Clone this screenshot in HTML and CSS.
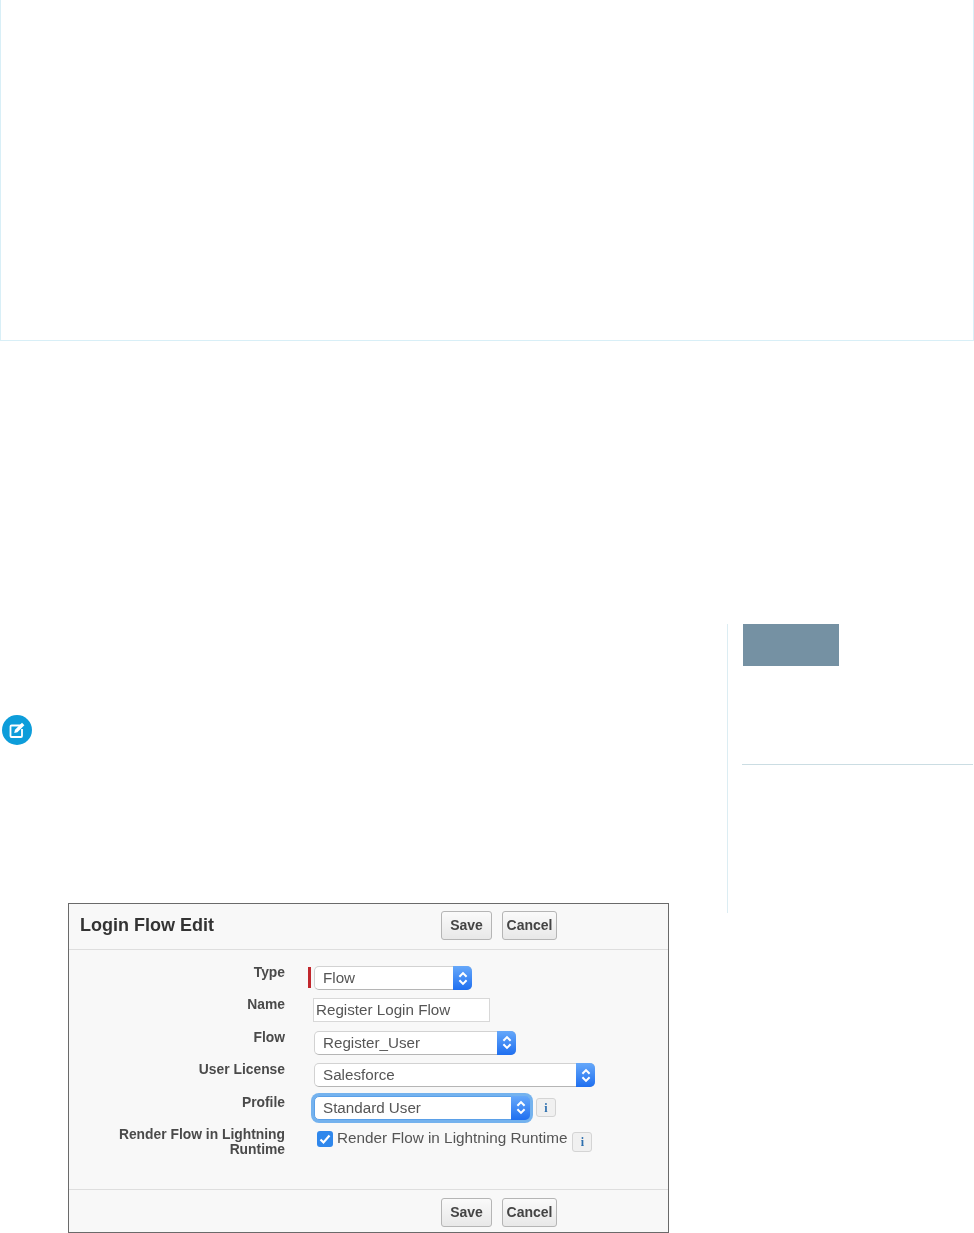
FILE: index.html
```html
<!DOCTYPE html>
<html lang="en">
<head>
    <meta charset="UTF-8">
    <meta name="viewport" content="width=device-width, initial-scale=1.0">
    <title>Login Flow Edit</title>
    <link rel="stylesheet" href="styles.css">
</head>
<body>
    <div class="top-panel"></div>

    <div class="content">
        <div class="main">
            <svg class="note-icon" width="30" height="30" viewBox="0 0 30 30">
                <circle cx="15" cy="15" r="15" fill="#0d9dda"/>
                <path d="M19 10.5H9.5a1 1 0 0 0-1 1V21a1 1 0 0 0 1 1H19a1 1 0 0 0 1-1v-7" fill="none" stroke="#fff" stroke-width="1.8"/>
                <path d="M13 14.8l7-7 2.4 2.4-7 7-3.2.8z" fill="#fff"/>
            </svg>

            <div class="shot">
                <div class="shot-bar shot-head">
                    <h2>Login Flow Edit</h2>
                    <button class="btn">Save</button>
                    <button class="btn btn-cancel">Cancel</button>
                </div>

                <div class="form">
                    <div class="label">Type</div>
                    <div class="field">
                        <span class="required"></span>
                        <div class="select w-flow">Flow<span class="cap"><svg width="12" height="17" viewBox="0 0 10 14"><path d="M2 5.5L5 2.5 8 5.5M2 8.5L5 11.5 8 8.5" fill="none" stroke="#fff" stroke-width="1.7"/></svg></span></div>
                    </div>

                    <div class="label">Name</div>
                    <div class="field">
                        <div class="text-input">Register Login Flow</div>
                    </div>

                    <div class="label">Flow</div>
                    <div class="field">
                        <div class="select w-register">Register_User<span class="cap"><svg width="12" height="17" viewBox="0 0 10 14"><path d="M2 5.5L5 2.5 8 5.5M2 8.5L5 11.5 8 8.5" fill="none" stroke="#fff" stroke-width="1.7"/></svg></span></div>
                    </div>

                    <div class="label">User License</div>
                    <div class="field">
                        <div class="select w-license">Salesforce<span class="cap"><svg width="12" height="17" viewBox="0 0 10 14"><path d="M2 5.5L5 2.5 8 5.5M2 8.5L5 11.5 8 8.5" fill="none" stroke="#fff" stroke-width="1.7"/></svg></span></div>
                    </div>

                    <div class="label">Profile</div>
                    <div class="field">
                        <div class="select w-profile focused">Standard User<span class="cap"><svg width="12" height="17" viewBox="0 0 10 14"><path d="M2 5.5L5 2.5 8 5.5M2 8.5L5 11.5 8 8.5" fill="none" stroke="#fff" stroke-width="1.7"/></svg></span></div>
                        <span class="info info-profile">i</span>
                    </div>

                    <div class="label">Render Flow in Lightning Runtime</div>
                    <div class="field field-check">
                        <span class="checkbox"><svg width="16" height="16" viewBox="0 0 16 16"><path d="M3.5 8.5L6.5 11.5 12.5 4.5" fill="none" stroke="#fff" stroke-width="2.2"/></svg></span>
                        <span class="check-text">Render Flow in Lightning Runtime</span>
                        <span class="info">i</span>
                    </div>
                </div>

                <div class="shot-bar shot-foot">
                    <button class="btn">Save</button>
                    <button class="btn btn-cancel">Cancel</button>
                </div>
            </div>
        </div>

        <div class="rail">
            <div class="rail-box"></div>
            <div class="rail-line"></div>
        </div>
    </div>
</body>
</html>
```

FILE: styles.css
```css
html, body {
    margin: 0;
    padding: 0;
    background: #fff;
}

body {
    font-family: "Liberation Sans", Arial, sans-serif;
    overflow-x: hidden;
}

.top-panel {
    box-sizing: border-box;
    height: 341px;
    border: 1px solid #d8eff7;
    border-top: none;
}

.content {
    display: flex;
    align-items: flex-start;
    margin-top: 283px;
}

.main {
    width: 727px;
    flex: none;
}

.note-icon {
    display: block;
    margin: 91px 0 0 2px;
}

/* Right rail */
.rail {
    box-sizing: border-box;
    width: 247px;
    height: 289px;
    padding: 0 1px 0 15px;
    border-left: 1px solid #dcedf3;
}

.rail-box {
    width: 96px;
    height: 42px;
    background: #7591a3;
}

.rail-line {
    height: 1px;
    margin: 98px 0 0 -1px;
    background: #cbdde3;
}

/* Screenshot of the edit form */
.shot {
    box-sizing: border-box;
    width: 601px;
    height: 330px;
    margin: 158px 0 0 68px;
    border: 1px solid #6a6a6a;
    background: #f8f8f8;
    color: #444;
    filter: blur(0.6px);
    display: flex;
    flex-direction: column;
}

.shot-bar {
    box-sizing: border-box;
    display: flex;
    align-items: center;
}

.shot-head {
    height: 46px;
    padding: 0 0 2px 11px;
    border-bottom: 1px solid #dedede;
}

.shot-head h2 {
    width: 361px;
    margin: 0;
    font-size: 18px;
    font-weight: bold;
    color: #333;
}

.shot-foot {
    height: 43px;
    padding: 3px 0 0 372px;
    border-top: 1px solid #dedede;
    margin-top: auto;
}

.btn {
    box-sizing: border-box;
    width: 51px;
    height: 29px;
    padding: 0 0 2px;
    border: 1px solid #b5b5b5;
    border-radius: 3px;
    background: linear-gradient(#fafafa, #e8e8e8);
    font-family: inherit;
    font-size: 14px;
    font-weight: bold;
    color: #444;
}

.btn-cancel {
    width: 55px;
    margin-left: 10px;
}

.form {
    display: grid;
    grid-template-columns: 216px 1fr;
    grid-auto-rows: 24px;
    column-gap: 28px;
    row-gap: 8.4px;
    padding-top: 16px;
}

.label {
    margin-top: -1px;
    font-size: 13.85px;
    line-height: 15px;
    font-weight: bold;
    text-align: right;
    color: #4a4a4a;
}

.field {
    position: relative;
    display: flex;
    align-items: center;
    height: 24px;
    font-size: 15.2px;
    color: #555;
}

.required {
    position: absolute;
    left: -5px;
    top: 1px;
    width: 3px;
    height: 21px;
    background: #c1272d;
}

.select {
    position: relative;
    box-sizing: border-box;
    height: 24px;
    margin-left: 1px;
    padding-left: 8px;
    line-height: 22px;
    background: #fff;
    border: 1px solid #d2d2d2;
    border-bottom-color: #b5b5b5;
    border-radius: 5px;
}

.w-flow { width: 158px; }
.w-register { width: 202px; }
.w-license { width: 281px; }
.w-profile { width: 216px; }

.focused {
    box-shadow: 0 0 0 3px #74b2ee;
    border-color: #5ba0e8;
}

.cap {
    position: absolute;
    top: -1px;
    right: -1px;
    bottom: -1px;
    width: 19px;
    display: flex;
    align-items: center;
    justify-content: center;
    background: linear-gradient(#66a8fa, #1f6ff0);
    border-radius: 0 5px 5px 0;
}

.text-input {
    box-sizing: border-box;
    width: 177px;
    height: 24px;
    padding-left: 2px;
    line-height: 21px;
    background: #fff;
    border: 1px solid #d8d8d8;
}

.info {
    box-sizing: border-box;
    width: 20px;
    height: 20px;
    margin-left: 5px;
    border: 1px solid #d4d4d4;
    border-radius: 3px;
    background: #f0f0f0;
    font-family: "Liberation Serif", serif;
    font-size: 12px;
    font-weight: bold;
    line-height: 19px;
    text-align: center;
    color: #2d6fae;
}

.info-profile {
    margin-left: 6px;
    height: 19px;
}

.field-check {
    align-items: flex-start;
    padding-left: 4px;
}

.field-check .info {
    margin-top: 4px;
}

.checkbox {
    width: 16px;
    height: 16px;
    margin-top: 3px;
    border-radius: 3px;
    background: #2f87ec;
    display: flex;
}

.check-text {
    margin-left: 4px;
    font-size: 15.3px;
    line-height: 20px;
}
```
